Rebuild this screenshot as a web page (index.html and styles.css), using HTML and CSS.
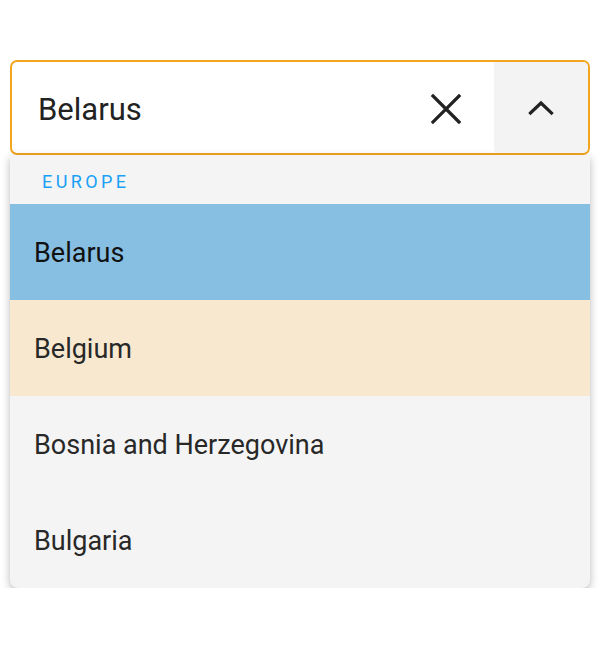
FILE: index.html
```html
<!DOCTYPE html>
<html>
<head>
<meta charset="utf-8">
<link rel="stylesheet" href="styles.css">
</head>
<body>
<div class="select">
  <div class="control">
    <div class="value">Belarus</div>
    <div class="clear">
      <svg width="32" height="32" viewBox="0 0 32 32"><path d="M3 3 L29 29 M29 3 L3 29" stroke="#222" stroke-width="3.2" fill="none" stroke-linecap="square"/></svg>
    </div>
    <div class="toggle">
      <svg width="26" height="16" viewBox="0 0 26 16"><path d="M2.5 13 L13 3 L23.5 13" stroke="#222" stroke-width="3.2" fill="none" stroke-linecap="square"/></svg>
    </div>
  </div>
  <div class="menu">
    <div class="group">EUROPE</div>
    <div class="option selected">Belarus</div>
    <div class="option focused">Belgium</div>
    <div class="option">Bosnia and Herzegovina</div>
    <div class="option">Bulgaria</div>
  </div>
</div>
</body>
</html>
```
FILE: styles.css
```css
html, body {
  margin: 0;
  padding: 0;
  background: #fff;
}
body {
  padding: 60px 10px 0 10px;
  font-family: Roboto, "Open Sans", sans-serif;
  color: #222;
}
.select {
  width: 580px;
}
.control {
  height: 95px;
  box-sizing: border-box;
  border: 2px solid #f3a520;
  border-radius: 7px;
  display: flex;
  align-items: stretch;
  overflow: hidden;
  background: #fff;
}
.value {
  flex: 1;
  display: flex;
  align-items: center;
  padding: 3px 0 0 26px;
  font-size: 31px;
  color: #222;
}
.clear {
  width: 96px;
  display: flex;
  align-items: center;
  justify-content: center;
  padding-top: 2px;
}
.toggle {
  width: 94px;
  background: #f3f3f3;
  display: flex;
  align-items: center;
  justify-content: center;
}
.menu {
  background: #f4f4f4;
  border-radius: 0 0 8px 8px;
  box-shadow: 0 3px 8px rgba(0,0,0,0.28);
  overflow: hidden;
}
.group {
  height: 49px;
  box-sizing: border-box;
  padding: 16px 0 0 32px;
  font-size: 18px;
  letter-spacing: 3.4px;
  color: #1aa0f5;
}
.option {
  height: 96px;
  box-sizing: border-box;
  display: flex;
  align-items: center;
  padding: 2px 0 0 24px;
  font-size: 27px;
  color: #282828;
}
.option.selected {
  background: #87bfe3;
  color: #111;
}
.option.focused {
  background: #f8e8d0;
}
```
